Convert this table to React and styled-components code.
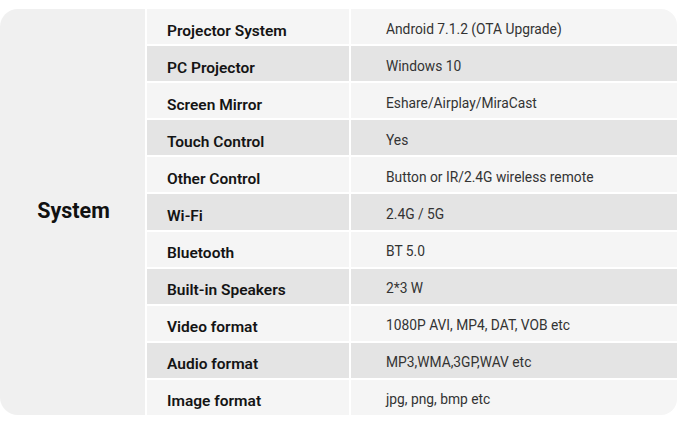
import { Fragment } from "react"
import styled, { createGlobalStyle } from "styled-components"

const GlobalStyle = createGlobalStyle`
    html, body {
        margin: 0;
        padding: 0;
        background: #ffffff;
        font-family: Roboto, "Liberation Sans", sans-serif;
    }
`

const Page = styled.div`
    width: 680px;
    height: 423px;
    padding: 9px 3px 8px 0;
    box-sizing: border-box;
`

const Card = styled.div`
    display: grid;
    grid-template-columns: 145px 1fr;
    column-gap: 2px;
    height: 100%;
`

const Category = styled.div`
    display: flex;
    align-items: center;
    justify-content: center;
    padding: 0 0 3px 2px;
    background-color: #f0f0f0;
    border-radius: 18px 0 0 18px;
    font-size: 21.5px;
    font-weight: 700;
    color: #111111;
`

const Table = styled.div`
    display: grid;
    grid-template-columns: 202px 1fr;
    grid-auto-rows: 1fr;
    gap: 2px;
    border-radius: 0 16px 16px 0;
    overflow: hidden;
`

const Cell = styled.div`
    display: flex;
    align-items: center;
    background-color: ${props => props.$shade ? "#e4e4e4" : "#f5f5f5"};
`

const Label = styled(Cell)`
    padding: 8px 0 0 20px;
    font-size: 15.5px;
    font-weight: 600;
    color: #141414;
`

const Value = styled(Cell)`
    padding: 4px 0 0 35px;
    font-size: 13.8px;
    color: #333333;
`

const specs = [
    ["Projector System", "Android 7.1.2 (OTA Upgrade)"],
    ["PC Projector", "Windows 10"],
    ["Screen Mirror", "Eshare/Airplay/MiraCast"],
    ["Touch Control", "Yes"],
    ["Other Control", "Button or IR/2.4G wireless remote"],
    ["Wi-Fi", "2.4G / 5G"],
    ["Bluetooth", "BT 5.0"],
    ["Built-in Speakers", "2*3 W"],
    ["Video format", "1080P AVI, MP4, DAT, VOB etc"],
    ["Audio format", "MP3,WMA,3GP,WAV etc"],
    ["Image format", "jpg, png, bmp etc"],
]

export default function App() {
    return (
        <Page>
            <GlobalStyle />
            <Card>
                <Category>System</Category>
                <Table>
                    {specs.map(([label, value], i) => (
                        <Fragment key={label}>
                            <Label $shade={i % 2 === 1}>{label}</Label>
                            <Value $shade={i % 2 === 1}>{value}</Value>
                        </Fragment>
                    ))}
                </Table>
            </Card>
        </Page>
    )
}
